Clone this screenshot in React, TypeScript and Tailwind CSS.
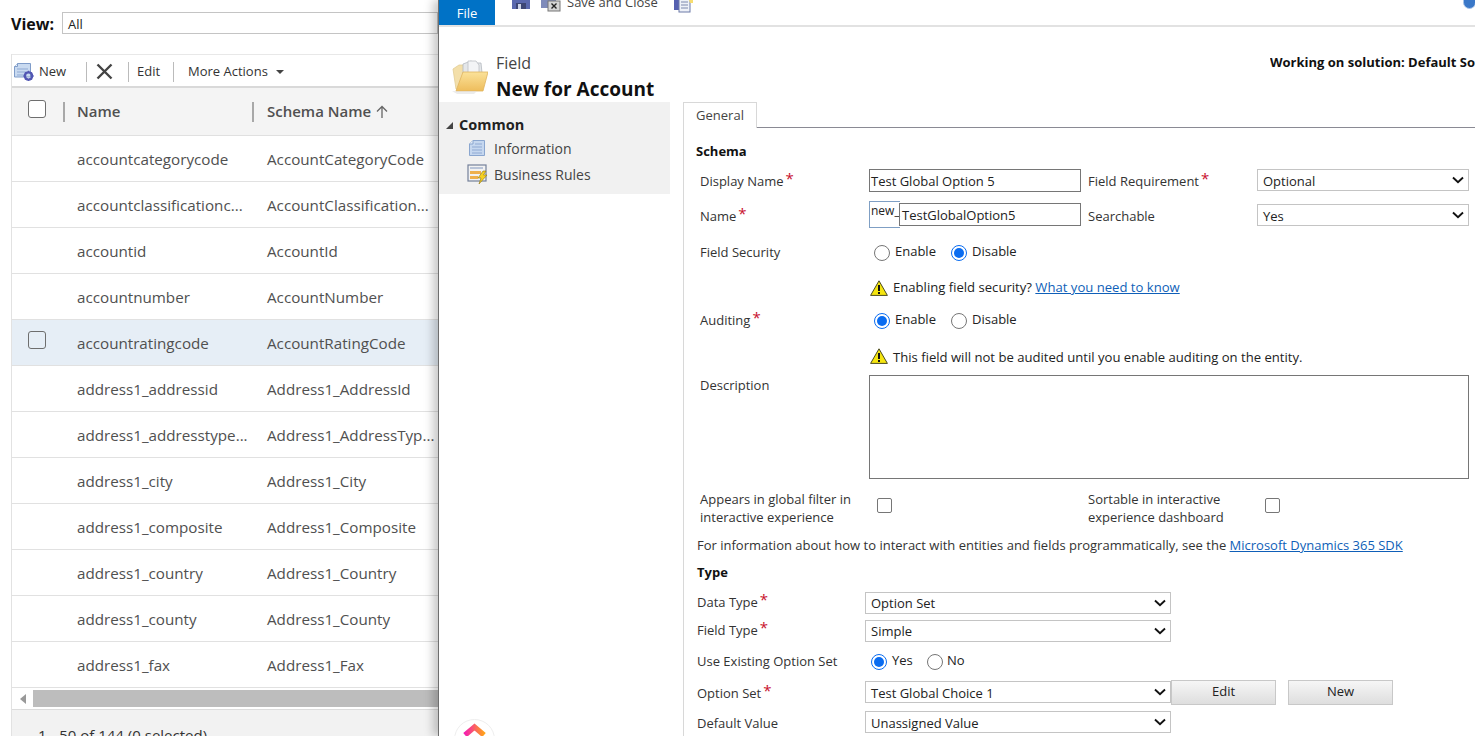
import React from "react";

const rows: [string, string][] = [
  ["accountcategorycode", "AccountCategoryCode"],
  ["accountclassificationc...", "AccountClassification..."],
  ["accountid", "AccountId"],
  ["accountnumber", "AccountNumber"],
  ["accountratingcode", "AccountRatingCode"],
  ["address1_addressid", "Address1_AddressId"],
  ["address1_addresstype...", "Address1_AddressTyp..."],
  ["address1_city", "Address1_City"],
  ["address1_composite", "Address1_Composite"],
  ["address1_country", "Address1_Country"],
  ["address1_county", "Address1_County"],
  ["address1_fax", "Address1_Fax"],
];

function Star() {
  return <span className="text-[#c8102e] text-[15px] leading-none relative -top-[4px] ml-[2px]">*</span>;
}

function Chevron() {
  return (
    <svg width="12" height="8" viewBox="0 0 12 8" className="shrink-0">
      <path d="M1 1.5 L6 6.2 L11 1.5" fill="none" stroke="#111" strokeWidth="1.9" />
    </svg>
  );
}

function Select({ value, w, pt = "pt-[1px]" }: { value: string; w: string; pt?: string }) {
  return (
    <div className={`${w} h-[22px] shrink-0 border border-[#c4c4c4] bg-white flex items-center justify-between pl-[5px] pr-[4px] text-[#222]`}>
      <span className={pt}>{value}</span>
      <Chevron />
    </div>
  );
}

function Radio({ on }: { on?: boolean }) {
  return on ? (
    <span className="w-[16px] h-[16px] rounded-full border-[1.5px] border-[#0a6cf0] flex items-center justify-center shrink-0">
      <span className="w-[10px] h-[10px] rounded-full bg-[#0a6cf0]" />
    </span>
  ) : (
    <span className="w-[16px] h-[16px] rounded-full border border-[#767676] shrink-0" />
  );
}

function Warn() {
  return (
    <svg width="18" height="16" viewBox="0 0 18 16" className="shrink-0">
      <path d="M9 .8 L17.4 15.4 H.6 Z" fill="#f5e50f" stroke="#4a4a20" strokeWidth="1" />
      <rect x="8" y="5" width="2" height="6" fill="#111" />
      <rect x="8" y="12" width="2" height="2" fill="#111" />
    </svg>
  );
}

function Box() {
  return <span className="w-[15px] h-[15px] border border-[#767676] rounded-[2px] bg-white shrink-0" />;
}

function FolderIcon() {
  return (
    <svg width="37" height="36" viewBox="0 0 37 36">
      <defs>
        <linearGradient id="flap" x1="0" x2="0" y1="0" y2="1">
          <stop offset="0" stopColor="#fbe29a" />
          <stop offset="1" stopColor="#eebd5c" />
        </linearGradient>
      </defs>
      <path d="M2 10 L8 6 H14 V30 H5 Z" fill="#f3dfaa" stroke="#e2cd94" strokeWidth="0.8" />
      <path d="M12 5 L20 2 L24 4 L30 4 L31 14 H12 Z" fill="#e4e7ea" stroke="#b4b9bf" strokeWidth="0.8" />
      <path d="M17 2 H25 L28 6 V14 H17 Z" fill="#f3f4f6" stroke="#bcc0c5" strokeWidth="0.8" />
      <path d="M12 13 H37 L32 32 H5 Z" fill="url(#flap)" stroke="#e0b45e" strokeWidth="0.8" />
      <path d="M1 32 L26 32 L23 35 H6 Z" fill="#dddddd" opacity="0.55" />
    </svg>
  );
}

function RibbonIcons({ kind }: { kind: "save" | "close" | "new" }) {
  if (kind === "save")
    return (
      <svg width="18" height="9" viewBox="0 0 18 9">
        <rect x="0" y="-6" width="18" height="15" fill="#5a68ad" />
        <rect x="4" y="3" width="10" height="6" fill="#3d4674" />
        <rect x="6" y="4" width="3" height="5" fill="#cdd3e6" />
      </svg>
    );
  if (kind === "close")
    return (
      <svg width="20" height="12" viewBox="0 0 20 12">
        <rect x="0" y="-6" width="15" height="14" fill="#7f8bba" />
        <rect x="7" y="1" width="12" height="10" fill="#d5d5d5" stroke="#777" />
        <path d="M10.5 3.5 L15.5 8.5 M15.5 3.5 L10.5 8.5" stroke="#222" strokeWidth="1.4" />
      </svg>
    );
  return (
    <svg width="19" height="13" viewBox="0 0 19 13">
      <rect x="0" y="-4" width="9" height="14" fill="#5560b0" />
      <rect x="5" y="-2" width="11" height="14" fill="#eef1f8" stroke="#6d7aa8" />
      <path d="M7 2 H14 M7 5 H14 M7 8 H14" stroke="#7c88ad" />
      <path d="M15 0 H19 V3 H16 Z" fill="#f7dd70" />
    </svg>
  );
}

function InfoIcon() {
  return (
    <svg width="16" height="16" viewBox="0 0 16 16">
      <path d="M4 .5 H15.5 V15.5 H.5 V4 Z" fill="#c5d7ef" stroke="#8aa6cf" />
      <path d="M4 .5 V4 H.5" fill="#e6eef9" stroke="#8aa6cf" />
      <path d="M3 7 H13 M3 10 H13 M3 13 H13 M6 4 H13" stroke="#8fa9d3" />
    </svg>
  );
}

function RulesIcon() {
  return (
    <svg width="21" height="21" viewBox="0 0 21 21">
      <rect x="1" y="1" width="18" height="16" fill="#f2f2f2" stroke="#74809a" strokeWidth="1.2" />
      <rect x="3" y="3" width="13" height="2" fill="#b9c4d8" />
      <rect x="3" y="7" width="11" height="3" fill="#eeb04c" />
      <rect x="3" y="12" width="8" height="3" fill="#eeb04c" />
      <path d="M16 7 L11 14 H14 L12 20 L20 11 H16.5 L19 7 Z" fill="#f5d020" stroke="#8f7410" strokeWidth="0.6" />
    </svg>
  );
}

function NewIcon() {
  return (
    <svg width="20" height="19" viewBox="0 0 20 19">
      <path d="M3.5 1.5 H16.5 V15 H.5 V4.5 Z" fill="#c9daf0" stroke="#7f9cc9" />
      <path d="M3.5 1.5 V4.5 H.5" fill="#eef3fb" stroke="#7f9cc9" />
      <path d="M3 7 H14 M3 10 H12 M3 13 H10" stroke="#8fa9d3" />
      <circle cx="14.5" cy="14" r="3.6" fill="none" stroke="#5257b3" strokeWidth="2.4" />
      <path d="M14.5 8.8 V10 M14.5 18 V19 M9.5 14 H10.8 M18.2 14 H19.6 M11 10.5 L12 11.5 M17 16.5 L18 17.5 M18 10.5 L17 11.5 M12 16.5 L11 17.5" stroke="#5257b3" strokeWidth="1.4" />
    </svg>
  );
}

function Label({ children, className = "" }: { children: React.ReactNode; className?: string }) {
  return <span className={`text-[#333] flex items-center ${className}`}>{children}</span>;
}

function LeftPanel() {
  return (
    <div className="w-[438px] h-full shrink-0 overflow-hidden bg-white">
      <div className="h-[54px] pl-[11px] pt-[12px] flex items-start">
        <span className="font-bold text-[16px] leading-[24px] text-[#111] w-[51px]">View:</span>
        <div className="flex-1 h-[22px] border border-[#c4c4c4] pl-[5px] pt-[1px] text-[13px] leading-[20px] text-[#222]">All</div>
      </div>
      <div className="ml-[11px] border-l border-[#e2e2e2]">
        <div className="h-[32px] pt-[2px] border-t border-[#e8e8e8] flex items-center text-[13px] text-[#333]">
          <span className="ml-[2px] w-[25px] flex"><NewIcon /></span>
          <span className="w-[47px]">New</span>
          <span className="w-px h-[20px] bg-[#bbb]" />
          <svg width="17" height="17" viewBox="0 0 17 17" className="ml-[9px] mr-[15px]">
            <path d="M1.5 1.5 L15.5 15.5 M15.5 1.5 L1.5 15.5" stroke="#444" strokeWidth="2.4" />
          </svg>
          <span className="w-px h-[20px] bg-[#bbb]" />
          <span className="ml-[8px] w-[36px]">Edit</span>
          <span className="w-px h-[20px] bg-[#bbb] mr-[14px]" />
          <span>More Actions</span>
          <span className="ml-[8px] w-0 h-0 border-l-[4px] border-r-[4px] border-t-[4px] border-l-transparent border-r-transparent border-t-[#444]" />
        </div>
        <div className="h-[50px] border-t-2 border-[#d9d9d9] border-b border-b-[#e0e0e0] bg-[#f4f4f4] flex items-center font-semibold text-[15px] text-[#505050]">
          <span className="ml-[16px] w-[18px] h-[18px] border-[1.5px] border-[#6e6e6e] rounded-[3px] bg-white shrink-0 -mt-[5px]" />
          <span className="ml-[17px] w-[2px] h-[20px] bg-[#a8a8a8]" />
          <span className="ml-[12px] w-[175px]">Name</span>
          <span className="w-[2px] h-[20px] bg-[#a8a8a8]" />
          <span className="ml-[13px] flex items-center gap-[4px] whitespace-nowrap">
            Schema Name
            <svg width="14" height="14" viewBox="0 0 14 14">
              <path d="M7 13 V2 M2 6.5 L7 1.5 L12 6.5" fill="none" stroke="#666" strokeWidth="1.3" />
            </svg>
          </span>
        </div>
        {rows.map((r, i) => (
          <div key={r[0]} className={`h-[46px] border-b border-[#e1e1e1] flex items-center text-[15.2px] text-[#505050] whitespace-nowrap ${i === 4 ? "bg-[#e6eef6]" : "bg-white"}`}>
            <span className="w-[65px] shrink-0 pl-[16px]">
              {i === 4 && <span className="block w-[18px] h-[18px] border-[1.5px] border-[#6e6e6e] rounded-[3px] -mt-[5px]" />}
            </span>
            <span className="w-[190px] shrink-0 pt-[2px]">{r[0]}</span>
            <span className="pt-[2px]">{r[1]}</span>
          </div>
        ))}
        <div className="h-[22px] border-b border-[#dcdcdc] flex items-center bg-white">
          <span className="ml-[8px] w-0 h-0 border-y-[5px] border-r-[6px] border-y-transparent border-r-[#999]" />
          <span className="ml-[7px] flex-1 h-[17px] bg-[#bdbdbd]" />
        </div>
        <div className="h-[40px] bg-[#f2f2f2] pl-[26px] pt-[14px] text-[15px] text-[#333] whitespace-nowrap">1 - 50 of 144 (0 selected)</div>
      </div>
    </div>
  );
}

function RightPanel() {
  return (
    <div className="relative z-10 flex-1 h-full overflow-hidden bg-white border-l border-[#6e6e6e] shadow-[-5px_0_9px_rgba(0,0,0,0.22)] text-[13px] text-[#222]">
      {/* ribbon */}
      <div className="h-[27px] border-b-2 border-[#e2e2e2] flex items-start relative">
        <div className="w-[56px] h-[25px] bg-[#0072c6] text-white text-[13px] flex items-center justify-center pt-[2px]">File</div>
        <span className="ml-[17px] flex"><RibbonIcons kind="save" /></span>
        <span className="ml-[11px] flex"><RibbonIcons kind="close" /></span>
        <span className="ml-[6px] text-[13px] leading-[13px] -mt-[4px] w-[107px] whitespace-nowrap text-[#444]">Save and Close</span>
        <span className="flex"><RibbonIcons kind="new" /></span>
        <span className="absolute right-[-1px] -top-[8px] w-[13px] h-[17px] rounded-full bg-[#3a78c8] border border-[#a9c4e8]" />
      </div>
      {/* header */}
      <div className="h-[75px] flex relative">
        <span className="ml-[12px] mt-[32px] w-[45px] shrink-0"><FolderIcon /></span>
        <div className="pt-[26px]">
          <div className="text-[16px] leading-[20px] text-[#444]">Field</div>
          <div className="text-[19px] leading-[28px] mt-[2px] font-bold text-[#111] whitespace-nowrap">New for Account</div>
        </div>
        <div className="ml-auto mt-[26px] font-bold text-[13px] leading-[18px] text-[#111] whitespace-nowrap w-[205px] overflow-hidden">Working on solution: Default Solution</div>
      </div>
      <div className="flex items-start">
        {/* nav */}
        <div className="w-[231px] h-[92px] shrink-0 bg-[#f1f1f1] text-[14px]">
          <div className="h-[33px] pt-[13px] flex items-center font-bold text-[14.5px] text-[#222] pl-[7px]">
            <span className="w-0 h-0 border-b-[7px] border-l-[7px] border-l-transparent border-b-[#444] mr-[6px]" />
            <span>Common</span>
          </div>
          <div className="h-[26px] flex items-center pl-[30px] gap-[9px] text-[#444]"><InfoIcon /><span>Information</span></div>
          <div className="h-[26px] flex items-center pl-[28px] gap-[6px] text-[#444]"><RulesIcon /><span>Business Rules</span></div>
        </div>
        {/* form */}
        <div className="ml-[13px] flex-1 min-w-0 border-l border-[#d8d8d8] h-[640px]">
          <div className="h-[26px] flex">
            <div className="w-[73px] h-[26px] border-t border-r border-[#d8d8d8] flex items-center justify-center text-[#444] bg-white relative z-10">General</div>
            <div className="flex-1 border-b border-[#8a8a94]" />
          </div>
          <div className="pl-[12px] h-[41px] pt-[14px] font-bold text-[#111] leading-[18px]">Schema</div>

          <div className="pl-[16px] h-[33px] flex items-start">
            <Label className="w-[169px] h-[24px] mt-[1px]">Display Name<Star /></Label>
            <div className="w-[212px] h-[23px] border border-[#767676] pl-[1px] pt-[2px] flex items-center shrink-0">Test Global Option 5</div>
            <Label className="ml-[7px] w-[169px] h-[24px] mt-[1px]">Field Requirement<Star /></Label>
            <Select value="Optional" w="w-[212px]" pt="pt-[3px]" />
          </div>
          <div className="pl-[16px] h-[34px] flex items-start">
            <Label className="w-[169px] h-[24px] mt-[3px]">Name<Star /></Label>
            <div className="w-[31px] h-[27px] border border-[#7f9fc4] border-r-0 text-[12px] leading-[18px] shrink-0 -mt-[1px] pl-[1px]">new_</div>
            <div className="w-[182px] h-[23px] border border-[#767676] pl-[2px] pt-[2px] flex items-center shrink-0 -ml-px mt-[1px]">TestGlobalOption5</div>
            <Label className="ml-[7px] w-[169px] h-[24px] mt-[3px]">Searchable</Label>
            <div className="mt-[2px]"><Select value="Yes" w="w-[212px]" pt="pt-[3px]" /></div>
          </div>
          <div className="pl-[16px] h-[34px] flex items-center">
            <Label className="w-[174px]">Field Security</Label>
            <Radio /><span className="ml-[5px] w-[56px] -mt-[2px]">Enable</span>
            <Radio on /><span className="ml-[5px] -mt-[2px]">Disable</span>
          </div>
          <div className="pl-[186px] h-[36px] flex items-center gap-[5px] text-[13.1px]">
            <Warn /><span>Enabling field security? <span className="text-[#0f5fb8] underline">What you need to know</span></span>
          </div>
          <div className="pl-[16px] h-[30px] flex items-center">
            <Label className="w-[174px]">Auditing<Star /></Label>
            <Radio on /><span className="ml-[5px] w-[56px] -mt-[2px]">Enable</span>
            <Radio /><span className="ml-[5px] -mt-[2px]">Disable</span>
          </div>
          <div className="pl-[186px] h-[38px] pt-[6px] flex items-center gap-[5px] text-[13.1px]">
            <span className="flex -mt-[5px]"><Warn /></span><span>This field will not be audited until you enable auditing on the entity.</span>
          </div>
          <div className="pl-[16px] h-[116px] flex items-start pt-[1px]">
            <Label className="w-[169px] h-[18px] mt-[2px]">Description</Label>
            <div className="w-[600px] h-[104px] border border-[#767676] shrink-0" />
          </div>
          <div className="pl-[16px] h-[43px] flex items-start">
            <span className="w-[177px] leading-[18px] text-[#333]">Appears in global filter in<br />interactive experience</span>
            <span className="flex mt-[8px] w-[211px]"><Box /></span>
            <span className="w-[177px] leading-[18px] text-[#333]">Sortable in interactive<br />experience dashboard</span>
            <span className="flex mt-[8px]"><Box /></span>
          </div>
          <div className="pl-[13px] h-[26px] flex items-center text-[#333] whitespace-nowrap">
            <span>For information about how to interact with entities and fields programmatically, see the <span className="text-[#0f5fb8] underline">Microsoft Dynamics 365 SDK</span></span>
          </div>
          <div className="pl-[13px] h-[33px] pt-[3px] font-bold text-[#111] leading-[20px]">Type</div>

          <div className="pl-[13px] h-[28px] flex items-start">
            <Label className="w-[168px] h-[22px]">Data Type<Star /></Label>
            <Select value="Option Set" w="w-[306px]" />
          </div>
          <div className="pl-[13px] h-[28px] flex items-start">
            <Label className="w-[168px] h-[22px]">Field Type<Star /></Label>
            <Select value="Simple" w="w-[306px]" />
          </div>
          <div className="pl-[13px] h-[33px] pb-[6px] flex items-center">
            <Label className="w-[174px]">Use Existing Option Set</Label>
            <Radio on /><span className="ml-[5px] w-[35px] -mt-[1px]">Yes</span>
            <Radio /><span className="ml-[4px] -mt-[1px]">No</span>
          </div>
          <div className="pl-[13px] h-[30px] flex items-start">
            <Label className="w-[168px] h-[26px]">Option Set<Star /></Label>
            <Select value="Test Global Choice 1" w="w-[306px]" pt="pt-[3px]" />
            <div className="w-[105px] h-[25px] -mt-px shrink-0 border border-[#c8c8c8] bg-gradient-to-b from-[#f6f6f6] to-[#dedede] flex items-center justify-center pb-[1px] text-[#222]">Edit</div>
            <div className="ml-[12px] w-[105px] h-[25px] -mt-px shrink-0 border border-[#c8c8c8] bg-gradient-to-b from-[#f6f6f6] to-[#dedede] flex items-center justify-center pb-[1px] text-[#222]">New</div>
          </div>
          <div className="pl-[13px] h-[28px] flex items-start">
            <Label className="w-[168px] h-[26px]">Default Value</Label>
            <Select value="Unassigned Value" w="w-[306px]" pt="pt-[3px]" />
          </div>
        </div>
      </div>
      {/* floating launcher */}
      <div className="absolute left-[15px] top-[719px] w-[41px] h-[41px] rounded-full bg-white border border-[#eeeeee] flex items-start justify-center pt-[3px]">
        <svg width="25" height="14" viewBox="0 0 25 14">
          <defs>
            <linearGradient id="cu" x1="0" x2="1" y1="0" y2="0">
              <stop offset="0" stopColor="#f51fb0" />
              <stop offset="1" stopColor="#ffa21a" />
            </linearGradient>
          </defs>
          <path d="M3 12 L12.5 4 L22 12" fill="none" stroke="url(#cu)" strokeWidth="5.5" />
        </svg>
      </div>
    </div>
  );
}

export default function App() {
  return (
    <div className="w-[1475px] h-[736px] flex overflow-hidden bg-white font-['Open_Sans','Noto_Sans',sans-serif]">
      <LeftPanel />
      <RightPanel />
    </div>
  );
}
